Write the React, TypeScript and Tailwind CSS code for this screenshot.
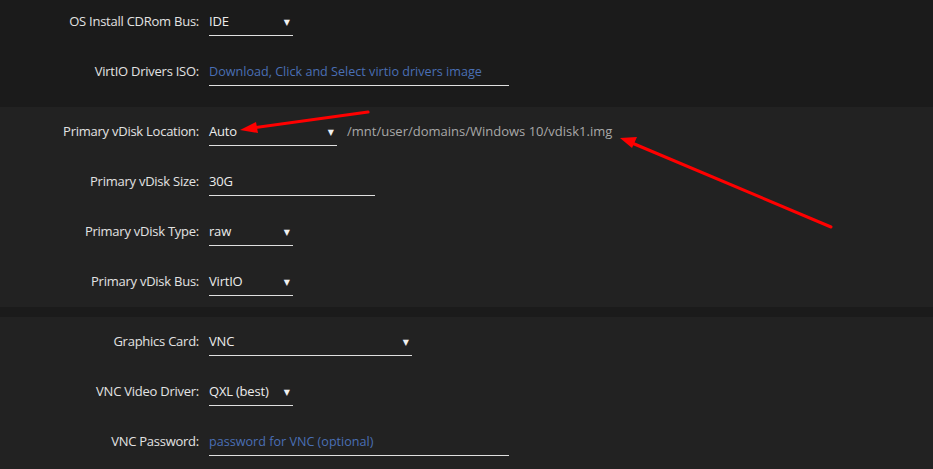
import React from "react";

type Field = {
  label: string;
  kind: "select" | "text";
  value: string;
  width: string;
  placeholder?: boolean;
  extra?: string;
};

const general: Field[] = [
  { label: "OS Install CDRom Bus:", kind: "select", value: "IDE", width: "w-[84px]" },
  { label: "VirtIO Drivers ISO:", kind: "text", value: "Download, Click and Select virtio drivers image", width: "w-[300px]", placeholder: true },
];

const disks: Field[] = [
  { label: "Primary vDisk Location:", kind: "select", value: "Auto", width: "w-[128px]", extra: "/mnt/user/domains/Windows 10/vdisk1.img" },
  { label: "Primary vDisk Size:", kind: "text", value: "30G", width: "w-[166px]" },
  { label: "Primary vDisk Type:", kind: "select", value: "raw", width: "w-[84px]" },
  { label: "Primary vDisk Bus:", kind: "select", value: "VirtIO", width: "w-[84px]" },
];

const graphics: Field[] = [
  { label: "Graphics Card:", kind: "select", value: "VNC", width: "w-[203px]" },
  { label: "VNC Video Driver:", kind: "select", value: "QXL (best)", width: "w-[84px]" },
  { label: "VNC Password:", kind: "text", value: "password for VNC (optional)", width: "w-[300px]", placeholder: true },
];

function Row({ f }: { f: Field }) {
  return (
    <div className="flex h-[50px] items-center">
      <div className="w-[200px] pr-px text-right font-medium tracking-[-0.25px] text-[#e2e2e2]">{f.label}</div>
      <div className="ml-[9px] flex items-center">
        <div className={`relative flex h-[28px] items-center border-b border-[#e0e0e0] ${f.width}`}>
          <span
            className={
              f.placeholder
                ? "pt-px text-[12.6px] text-[#4a6fb5]"
                : "font-medium tracking-[-0.2px] text-[#ececec]"
            }
          >
            {f.value}
          </span>
          {f.kind === "select" && (
            <span className="absolute right-[3px] top-[8px] text-[8px] text-[#f0f0f0]">▼</span>
          )}
        </div>
        {f.extra && <span className="ml-[10px] text-[#a8a8a8]">{f.extra}</span>}
      </div>
    </div>
  );
}

export default function App() {
  return (
    <div
      className="relative h-[469px] w-[933px] overflow-hidden bg-[#1b1b1b] text-[13px]"
      style={{ fontFamily: '"Open Sans", "DejaVu Sans", sans-serif' }}
    >
      <div className="-mt-[3px] h-[100px]">
        {general.map((f) => (
          <Row key={f.label} f={f} />
        ))}
      </div>
      <div className="mt-[10px] bg-[#222222]">
        {disks.map((f) => (
          <Row key={f.label} f={f} />
        ))}
      </div>
      <div className="mt-[10px] h-[160px] bg-[#222222]">
        {graphics.map((f) => (
          <Row key={f.label} f={f} />
        ))}
      </div>

      {/* annotation arrows */}
      <svg className="pointer-events-none absolute left-0 top-0" width="933" height="469">
        <line x1="368" y1="112" x2="252" y2="128" stroke="#ff0000" strokeWidth="3" strokeLinecap="round" />
        <polygon points="240,130 256,122 258,133" fill="#ff0000" />
        <line x1="831" y1="227" x2="632" y2="143" stroke="#ff0000" strokeWidth="3" strokeLinecap="round" />
        <polygon points="620,138 637,137 632,148" fill="#ff0000" />
      </svg>
    </div>
  );
}
